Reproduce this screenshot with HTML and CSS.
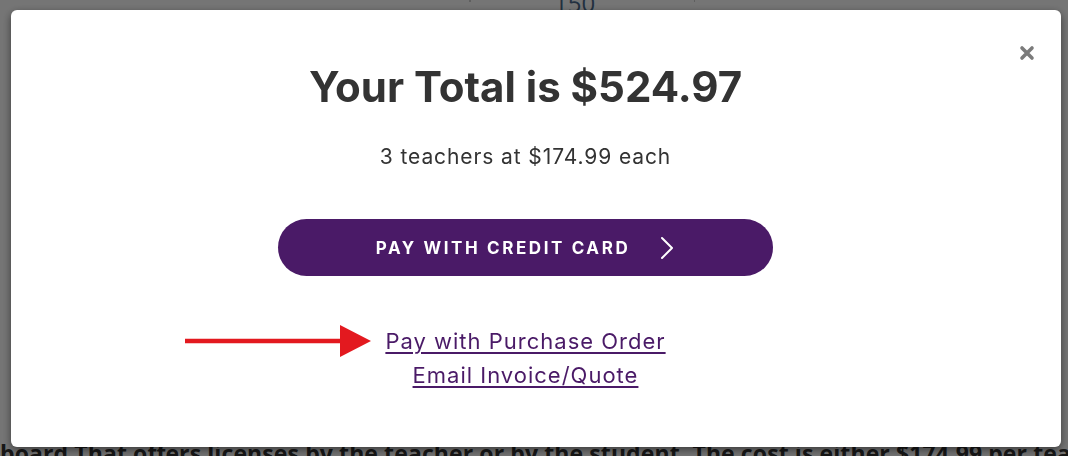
FILE: index.html
```html
<!DOCTYPE html>
<html lang="en">
<head>
<meta charset="utf-8">
<title>Your Total</title>
<link rel="stylesheet" href="styles.css">
</head>
<body>
<div class="page">
  <div class="bg-table">
    <div class="bg-cell bg-cell-left"></div>
    <div class="bg-cell bg-cell-mid">150</div>
    <div class="bg-cell bg-cell-right"></div>
  </div>
  <div class="bg-spacer"></div>
  <p class="bg-text">board That offers licenses by the teacher or by the student. The cost is either $174.99 per teacher</p>
</div>
<div class="overlay"></div>
<div class="modal">
  <button class="close" aria-label="Close">
    <svg width="16" height="16" viewBox="0 0 16 16"><path d="M3 3 L13 13 M13 3 L3 13" stroke="#7b7b7b" stroke-width="3.6" stroke-linecap="round"/></svg>
  </button>
  <h1 class="title">Your Total is $524.97</h1>
  <p class="sub">3 teachers at $174.99 each</p>
  <a class="pay-btn" href="#">
    <span>PAY WITH CREDIT CARD</span>
    <svg class="chev" width="16" height="24" viewBox="0 0 16 24"><path d="M3 2 L13 12 L3 22" fill="none" stroke="#ffffff" stroke-width="2" stroke-linecap="round" stroke-linejoin="round"/></svg>
  </a>
  <div class="links">
    <div class="po-row">
      <svg class="arrow" width="190" height="34" viewBox="0 0 190 34"><path d="M0 17 L158 17" stroke="#e3191f" stroke-width="4.5"/><path d="M155 1 L186 17 L155 33 Z" fill="#e3191f"/></svg>
      <a class="link" href="#">Pay with Purchase Order</a>
    </div>
    <a class="link" href="#">Email Invoice/Quote</a>
  </div>
</div>
</body>
</html>
```
FILE: styles.css
```css
html, body {
  margin: 0;
  padding: 0;
  width: 1068px;
  height: 456px;
  overflow: hidden;
  background: #ffffff;
}

.page {
  font-family: "Open Sans", "Liberation Sans", sans-serif;
}

.bg-table {
  display: flex;
  height: 12px;
  margin-top: -10px;
  padding-left: 469px;
}

.bg-cell {
  border-left: 1px solid #cfcfcf;
  box-sizing: border-box;
}

.bg-cell-mid {
  width: 224px;
  font-size: 24px;
  line-height: 26px;
  color: #4a6a8c;
  padding-left: 83px;
}

.bg-cell-right {
  width: 40px;
}

.bg-spacer {
  height: 436px;
}

.bg-text {
  margin: 0;
  white-space: nowrap;
  font-size: 23px;
  font-weight: 700;
  line-height: 30px;
  color: #333333;
  letter-spacing: 0.1px;
  padding-left: 0;
}

.overlay {
  position: fixed;
  inset: 0;
  background: rgba(0, 0, 0, 0.54);
}

.modal {
  position: fixed;
  left: 11px;
  top: 10px;
  width: 1050px;
  height: 437px;
  box-sizing: border-box;
  background: #ffffff;
  border-radius: 6px;
  box-shadow: 0 3px 9px rgba(0, 0, 0, 0.5);
  display: flex;
  flex-direction: column;
  align-items: center;
  padding: 52px 21px 0 0;
  font-family: "Inter", "Liberation Sans", sans-serif;
  color: #333333;
}

.close {
  position: absolute;
  top: 35px;
  right: 26px;
  width: 16px;
  height: 16px;
  padding: 0;
  border: 0;
  background: none;
  display: block;
}

.close svg {
  display: block;
}

.title {
  margin: 0;
  font-size: 42px;
  line-height: 50px;
  font-weight: 700;
  letter-spacing: 0;
  color: #333333;
}

.sub {
  margin: 31px 0 0;
  font-size: 21px;
  line-height: 28px;
  font-weight: 400;
  letter-spacing: 0.9px;
  color: #333333;
}

.pay-btn {
  margin-top: 48px;
  width: 495px;
  height: 57px;
  border-radius: 29px;
  background: #4a1a67;
  color: #ffffff;
  text-decoration: none;
  display: flex;
  align-items: center;
  justify-content: center;
  gap: 29px;
  box-sizing: border-box;
  font-size: 17px;
  font-weight: 700;
  letter-spacing: 2.6px;
}

.chev {
  display: block;
}

.links {
  margin-top: 48px;
  display: flex;
  flex-direction: column;
  align-items: center;
}

.po-row {
  position: relative;
}

.arrow {
  position: absolute;
  right: calc(100% + 10px);
  top: 0;
}

.link {
  display: block;
  font-size: 22px;
  line-height: 34px;
  letter-spacing: 1px;
  color: #4a1a67;
  text-decoration: underline;
  text-underline-offset: 3px;
  text-decoration-thickness: 1.5px;
}
```
